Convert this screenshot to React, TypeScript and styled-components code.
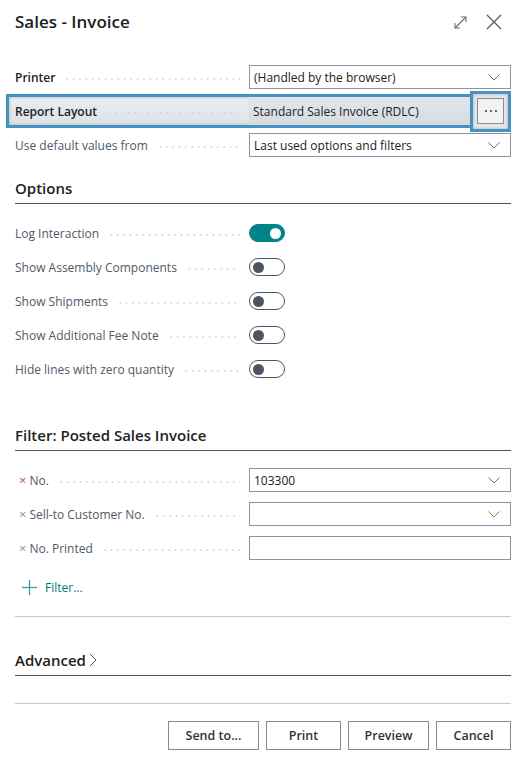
import * as React from "react";
import styled, { createGlobalStyle } from "styled-components";

const GlobalStyle = createGlobalStyle`
  html, body {
    margin: 0;
    padding: 0;
    background: #fff;
  }
  body {
    font-family: "Open Sans", "Noto Sans", "Liberation Sans", sans-serif;
    font-size: 12px;
    color: #212121;
  }
`;

const Dialog = styled.div`
  width: 529px;
  height: 758px;
  box-sizing: border-box;
  padding: 0 18px 0 15px;
  background: #fff;
  overflow: hidden;
`;

const Header = styled.div`
  height: 60px;
  display: flex;
  align-items: flex-start;
  justify-content: space-between;
`;

const Title = styled.h1`
  margin: 10px 0 0;
  font-size: 17px;
  line-height: 24px;
  font-weight: 600;
  color: #212121;
`;

const HeaderIcons = styled.div`
  display: flex;
  align-items: center;
  gap: 18px;
  margin-top: 14px;
  margin-right: 9px;
`;

const Row = styled.div`
  display: grid;
  grid-template-columns: 234px 1fr;
  align-items: center;
  height: 34px;
`;

const Label = styled.div<{ $strong?: boolean }>`
  display: flex;
  align-items: center;
  gap: 9px;
  padding-right: 9px;
  white-space: nowrap;
  font-weight: ${(p) => (p.$strong ? 600 : 400)};
  color: ${(p) => (p.$strong ? "#212121" : "#505a66")};
`;

const Leader = styled.span`
  flex: 1;
  height: 2px;
  margin-top: 3px;
  background-image: radial-gradient(circle, #cdd0d4 0.8px, transparent 1.1px);
  background-size: 6.4px 2px;
  background-repeat: repeat-x;
`;

const Input = styled.div`
  height: 24px;
  box-sizing: border-box;
  border: 1px solid #8c96a2;
  display: flex;
  align-items: center;
  justify-content: space-between;
  padding: 0 10px 0 4px;
  color: #212121;
`;

const HighlightRow = styled.div`
  display: flex;
  align-items: center;
  height: 34px;
  margin-left: -9px;
`;

const HighlightMain = styled.div`
  flex: 1;
  display: grid;
  grid-template-columns: 234px 1fr;
  align-items: center;
  height: 34px;
  box-sizing: border-box;
  border: 3px solid #4592c3;
  padding-left: 6px;
  background: linear-gradient(#e9ecef, #dfe3e7);
  box-shadow: inset 0 0 3px rgba(40, 60, 80, 0.35);
`;

const HighlightValue = styled.div`
  height: 100%;
  display: flex;
  align-items: center;
  padding-left: 4px;
  background: linear-gradient(#e2e5e9, #d8dce1);
`;

const MoreBox = styled.div`
  width: 41px;
  height: 41px;
  margin-left: -3px;
  box-sizing: border-box;
  border: 3px solid #4592c3;
  background: #e4e7ea;
  box-shadow: inset 0 0 3px rgba(40, 60, 80, 0.35);
  display: flex;
  align-items: center;
  justify-content: center;
`;

const MoreButton = styled.div`
  width: 27px;
  height: 26px;
  box-sizing: border-box;
  border: 1px solid #8d8d8d;
  background: #f2f2f2;
  display: flex;
  align-items: center;
  justify-content: center;
  gap: 3px;
`;

const Dot = styled.span`
  width: 2px;
  height: 2px;
  border-radius: 1px;
  background: #3a3a3a;
`;

const SectionTitle = styled.div<{ $top: number }>`
  margin-top: ${(p) => p.$top}px;
  padding-bottom: 4px;
  border-bottom: 1px solid #4c5563;
  font-size: 15px;
  line-height: 22px;
  font-weight: 600;
  color: #212121;
  display: flex;
  align-items: center;
  gap: 3px;
`;

const SectionBody = styled.div<{ $top: number }>`
  margin-top: ${(p) => p.$top}px;
`;

const Toggle = styled.div<{ $on?: boolean }>`
  width: 36px;
  height: 18px;
  box-sizing: border-box;
  border-radius: 9px;
  border: 1.5px solid ${(p) => (p.$on ? "#00848a" : "#4d5563")};
  background: ${(p) => (p.$on ? "#00848a" : "#fff")};
  display: flex;
  align-items: center;
  justify-content: ${(p) => (p.$on ? "flex-end" : "flex-start")};
  padding: 0 3px;
`;

const Knob = styled.span<{ $on?: boolean }>`
  width: 11px;
  height: 11px;
  border-radius: 50%;
  background: ${(p) => (p.$on ? "#fff" : "#4d5563")};
`;

const Remove = styled.span<{ $tone?: string }>`
  color: ${(p) => p.$tone || "#8c8f99"};
  font-size: 13px;
  margin: 0 3px 0 4px;
`;

const AddFilter = styled.div`
  margin-top: 10px;
  height: 24px;
  display: flex;
  align-items: center;
  gap: 8px;
  padding-left: 7px;
  color: #00797f;
  font-size: 12px;
`;

const Separator = styled.div<{ $top: number }>`
  margin-top: ${(p) => p.$top}px;
  height: 1px;
  background: #c8c8c8;
`;

const Footer = styled.div`
  margin-top: 17px;
  display: flex;
  justify-content: flex-end;
  gap: 7px;
`;

const Button = styled.button<{ $w: number }>`
  width: ${(p) => p.$w}px;
  height: 29px;
  box-sizing: border-box;
  border: 1px solid #8a8a8a;
  background: #fff;
  font-family: inherit;
  font-size: 12.5px;
  font-weight: 600;
  color: #333;
  padding: 0;
`;

const Chevron = ({ color = "#6b6f75" }: { color?: string }) => (
  <svg width="12" height="7" viewBox="0 0 12 7">
    <path d="M0.5 0.5 L6 6 L11.5 0.5" fill="none" stroke={color} strokeWidth="1" />
  </svg>
);

const Leadered = ({ text, strong }: { text: React.ReactNode; strong?: boolean }) => (
  <Label $strong={strong}>
    <span>{text}</span>
    <Leader />
  </Label>
);

const toggles = [
  { label: "Log Interaction", on: true },
  { label: "Show Assembly Components", on: false },
  { label: "Show Shipments", on: false },
  { label: "Show Additional Fee Note", on: false },
  { label: "Hide lines with zero quantity", on: false },
];

export default function App() {
  return (
    <>
      <GlobalStyle />
      <Dialog>
        <Header>
          <Title>Sales - Invoice</Title>
          <HeaderIcons>
            <svg width="15" height="15" viewBox="0 0 15 15">
              <g fill="none" stroke="#6a6a6a" strokeWidth="1.1">
                <path d="M2 13 L13 2" />
                <path d="M8 2 H13 V7" />
                <path d="M2 8 V13 H7" />
              </g>
            </svg>
            <svg width="16" height="16" viewBox="0 0 16 16">
              <g fill="none" stroke="#5a5a5a" strokeWidth="1.3">
                <path d="M1 1 L15 15" />
                <path d="M15 1 L1 15" />
              </g>
            </svg>
          </HeaderIcons>
        </Header>

        <Row>
          <Leadered text="Printer" strong />
          <Input>
            <span>(Handled by the browser)</span>
            <Chevron />
          </Input>
        </Row>
        <HighlightRow>
          <HighlightMain>
            <Leadered text="Report Layout" strong />
            <HighlightValue>Standard Sales Invoice (RDLC)</HighlightValue>
          </HighlightMain>
          <MoreBox>
            <MoreButton>
              <Dot />
              <Dot />
              <Dot />
            </MoreButton>
          </MoreBox>
        </HighlightRow>
        <Row>
          <Leadered text="Use default values from" />
          <Input>
            <span>Last used options and filters</span>
            <Chevron />
          </Input>
        </Row>

        <SectionTitle $top={15}>Options</SectionTitle>
        <SectionBody $top={12}>
          {toggles.map((t) => (
            <Row key={t.label}>
              <Leadered text={t.label} />
              <Toggle $on={t.on}>
                <Knob $on={t.on} />
              </Toggle>
            </Row>
          ))}
        </SectionBody>

        <SectionTitle $top={38}>Filter: Posted Sales Invoice</SectionTitle>
        <SectionBody $top={12}>
          <Row>
            <Leadered text={<><Remove $tone="#c0504d">×</Remove>No.</>} />
            <Input>
              <span>103300</span>
              <Chevron />
            </Input>
          </Row>
          <Row>
            <Leadered text={<><Remove>×</Remove>Sell-to Customer No.</>} />
            <Input>
              <span />
              <Chevron color="#a07a50" />
            </Input>
          </Row>
          <Row>
            <Leadered text={<><Remove>×</Remove>No. Printed</>} />
            <Input />
          </Row>
        </SectionBody>
        <AddFilter>
          <svg width="15" height="15" viewBox="0 0 15 15">
            <g stroke="#3a9da0" strokeWidth="1.3">
              <path d="M7.5 0 V15" />
              <path d="M0 7.5 H15" />
            </g>
          </svg>
          <span>Filter...</span>
        </AddFilter>

        <Separator $top={17} />

        <SectionTitle $top={32}>
          Advanced
          <svg width="8" height="14" viewBox="0 0 8 14">
            <path d="M1 1 L7 7 L1 13" fill="none" stroke="#555" strokeWidth="1" />
          </svg>
        </SectionTitle>

        <Separator $top={27} />

        <Footer>
          <Button $w={91}>Send to...</Button>
          <Button $w={75}>Print</Button>
          <Button $w={81}>Preview</Button>
          <Button $w={75}>Cancel</Button>
        </Footer>
      </Dialog>
    </>
  );
}
